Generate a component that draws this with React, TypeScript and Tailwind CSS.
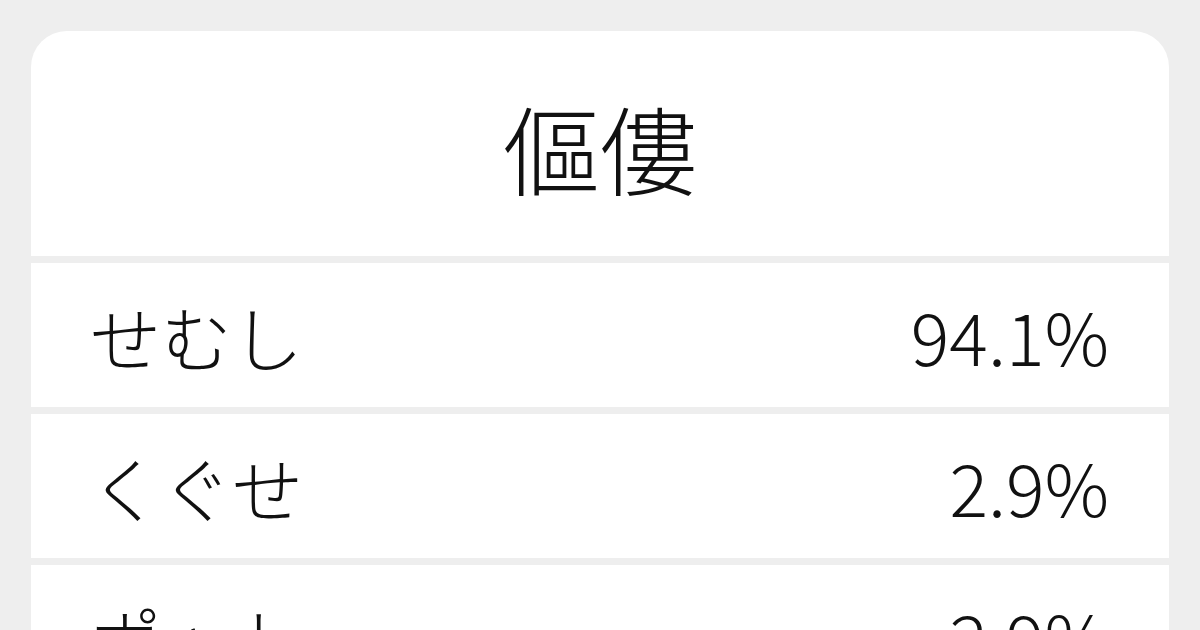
const rows = [
  { reading: "せむし", pct: "94.1%" },
  { reading: "くぐせ", pct: "2.9%" },
  { reading: "ポット", pct: "2.9%" },
];

export default function App() {
  return (
    <div
      className="w-[1200px] h-[630px] overflow-hidden bg-[#eeeeee] pt-[31px] px-[31px] text-[#111111]"
      style={{ fontFamily: '"Noto Sans CJK JP", "Noto Sans", sans-serif' }}
    >
      <div className="flex flex-col gap-[7px] rounded-t-[36px] overflow-hidden">
        <div className="h-[225px] bg-white flex items-center justify-center pt-[4px]">
          <h1 className="text-[97px] font-light leading-none">傴僂</h1>
        </div>
        {rows.map((r) => (
          <div
            key={r.reading}
            className="h-[144px] bg-white flex items-center justify-between pl-[59px] pr-[60px]"
          >
            <span className="text-[71px] font-light leading-none">{r.reading}</span>
            <span className="text-[72px] font-light leading-none">{r.pct}</span>
          </div>
        ))}
      </div>
    </div>
  );
}
